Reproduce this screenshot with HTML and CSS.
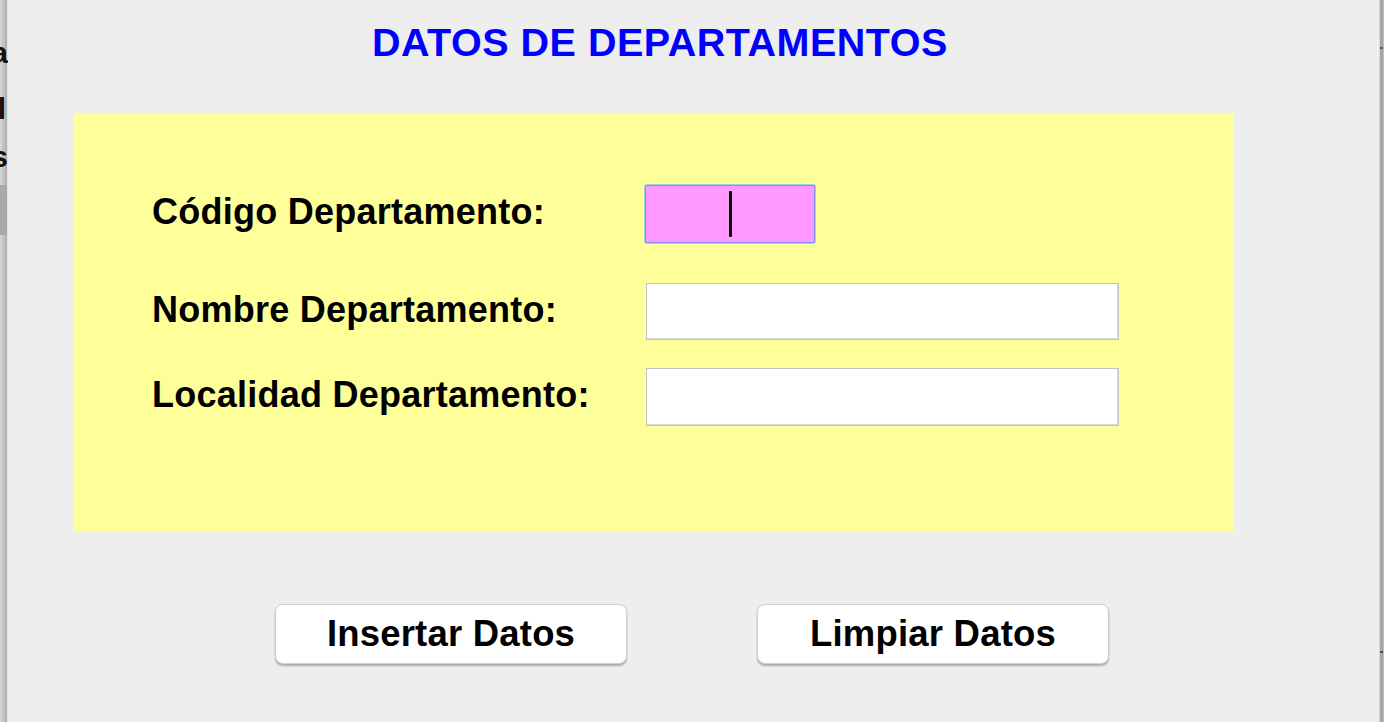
FILE: index.html
```html
<!DOCTYPE html>
<html lang="es">
<head>
<meta charset="utf-8">
<title>Datos de Departamentos</title>
<link rel="stylesheet" href="styles.css">
</head>
<body>
<div class="window">
  <div class="edge-left">
    <span class="ghost g1">a</span>
    <span class="ghost g2">l</span>
    <span class="ghost g3">s</span>
    <span class="thumb"></span>
  </div>
  <main class="main">
    <h1 class="title">DATOS DE DEPARTAMENTOS</h1>
    <section class="panel">
      <div class="row row-1">
        <label class="label">Código Departamento:</label>
        <div class="field field-code"><span class="caret"></span></div>
      </div>
      <div class="row row-2">
        <label class="label">Nombre Departamento:</label>
        <div class="field field-wide"></div>
      </div>
      <div class="row row-3">
        <label class="label">Localidad Departamento:</label>
        <div class="field field-wide"></div>
      </div>
    </section>
    <div class="buttons">
      <button class="btn">Insertar Datos</button>
      <button class="btn">Limpiar Datos</button>
    </div>
  </main>
  <div class="edge-right"><span class="tick t1"></span><span class="tick t2"></span></div>
</div>
</body>
</html>
```
FILE: styles.css
```css
* { box-sizing: border-box; }
html, body {
  margin: 0;
  padding: 0;
  background: #eeeeee;
}
body {
  width: 1384px;
  height: 722px;
  overflow: hidden;
  font-family: "Liberation Sans", Arial, sans-serif;
}
.window {
  display: flex;
  height: 722px;
}
.edge-left {
  width: 8px;
  flex: none;
  position: relative;
  overflow: hidden;
  background: linear-gradient(to right, #d4d4d4 0, #d4d4d4 2px, #c2c2c2 2px, #c2c2c2 5px, #b2b2b2 5px, #b2b2b2 7px, #e4e4e4 7px);
}
.ghost {
  position: absolute;
  right: 1px;
  font-family: "Liberation Sans", Arial, sans-serif;
  font-weight: bold;
  font-size: 30px;
  line-height: 30px;
  color: #111;
}
.g1 { top: 38px; right: 0; }
.g2 { top: 94px; right: 2px; color: #1a1208; }
.g3 { top: 142px; right: 0; }
.thumb {
  position: absolute;
  left: 0;
  top: 185px;
  width: 7px;
  height: 50px;
  background: #a9a9a9;
}
.edge-right {
  width: 5px;
  flex: none;
  position: relative;
  background: linear-gradient(to right, #d8d8d8 0, #d8d8d8 1px, #a6a6a6 1px, #a6a6a6 4px, #bdbdbd 4px);
}
.tick {
  position: absolute;
  left: 1px;
  width: 3px;
  height: 2px;
  background: #555;
}
.t1 { top: 47px; }
.t2 { top: 651px; }
.main {
  flex: 1;
  padding: 18px 0 0 66px;
}
.title {
  margin: 0 0 48px 298px;
  font-size: 39.5px;
  letter-spacing: 0.5px;
  line-height: 48px;
  font-weight: bold;
  color: #0000ff;
}
.panel {
  width: 1160px;
  height: 417px;
  background: #ffff99;
  padding: 71px 0 0 78px;
}
.row {
  display: flex;
  align-items: center;
}
.row-2 { margin-top: 40px; }
.row-3 { margin-top: 28px; }
.label {
  width: 494px;
  flex: none;
  font-size: 36px;
  letter-spacing: 0.25px;
  font-weight: bold;
  color: #000;
  line-height: 40px;
  padding-bottom: 4px;
}
.field {
  height: 58px;
  background: #fff;
  border: 1px solid #c4c4c4;
  box-shadow: inset -1px -1px 0 #d8d8d8;
}
.row-2 .field { height: 57px; }
.field-wide { width: 473px; }
.field-code {
  width: 170px;
  margin-left: -1px;
  background: #ff99ff;
  border: 1px solid #7f8cf4;
  box-shadow: 0 0 0 1px #9fd4d8;
  border-radius: 2px;
  display: flex;
  align-items: center;
  justify-content: center;
}
.caret {
  display: block;
  width: 3px;
  height: 46px;
  background: #000;
  border-radius: 1px;
}
.buttons {
  display: flex;
  gap: 130px;
  margin: 73px 0 0 201px;
}
.btn {
  width: 352px;
  height: 60px;
  background: #ffffff;
  border: 1px solid #cfcfcf;
  border-radius: 8px;
  box-shadow: 0 2px 2px rgba(0, 0, 0, 0.28);
  font-family: "Liberation Sans", Arial, sans-serif;
  font-size: 36.5px;
  letter-spacing: 0.2px;
  font-weight: bold;
  color: #000;
  padding: 0;
  line-height: 58px;
}
```
